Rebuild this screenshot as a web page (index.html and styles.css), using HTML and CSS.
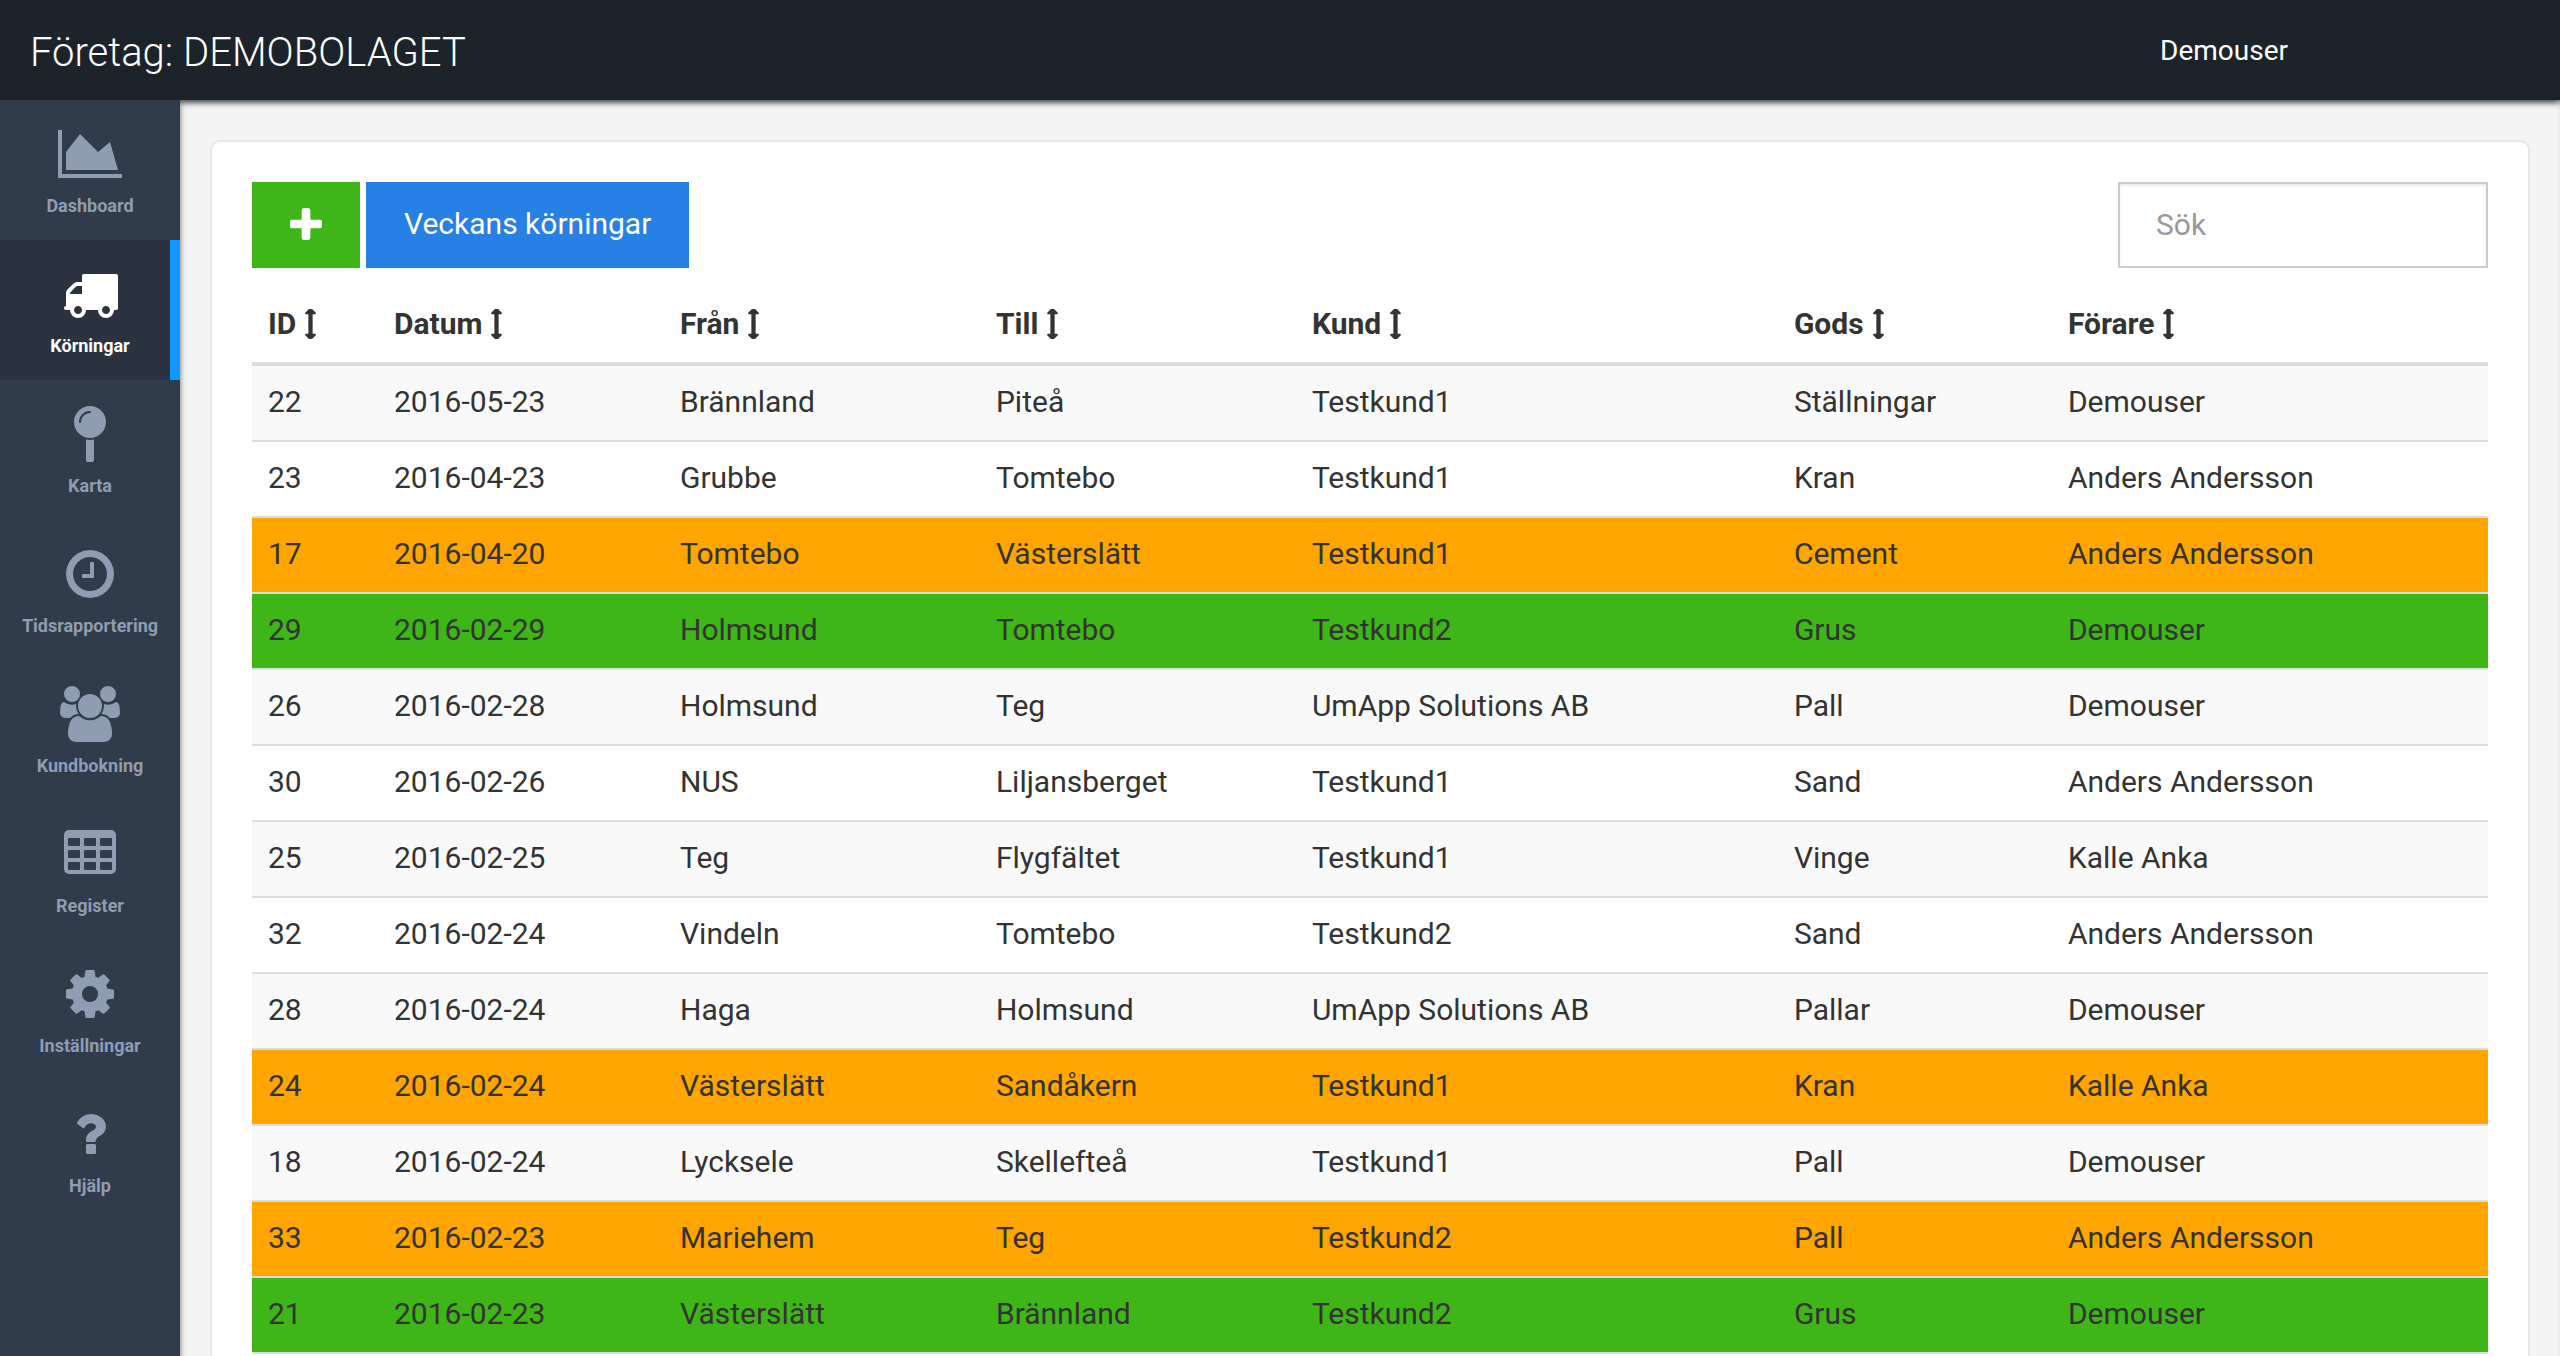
FILE: index.html
```html
<!DOCTYPE html>
<html lang="sv">
<head>
<meta charset="utf-8">
<meta name="viewport" content="width=device-width, initial-scale=1">
<title>Körningar</title>
<link rel="stylesheet" href="styles.css">
</head>
<body>
<svg class="sprite" aria-hidden="true">
  <symbol id="sort" viewBox="0 0 640 1792"><path d="M640 256q0 26-19 45t-45 19h-128v1152h128q26 0 45 19t19 45-19 45l-256 256q-19 19-45 19t-45-19l-256-256q-19-19-19-45t19-45 45-19h128v-1152h-128q-26 0-45-19t-19-45 19-45l256-256q19-19 45-19t45 19l256 256q19 19 19 45z"/></symbol>
</svg>
<div class="app">
  <header class="topbar">
    <h1 class="company">Företag: DEMOBOLAGET</h1>
    <a class="user" href="#">Demouser</a>
  </header>
  <div class="body">
    <nav class="sidebar">
      <a class="nav-item" href="#">
        <svg class="nav-icon" viewBox="0 0 2048 1792"><path d="M2048 1536v128h-2048v-1536h128v1408h1920zm-384-1024l256 896h-1664v-576l448-576 576 576z"/></svg>
        <span>Dashboard</span>
      </a>
      <a class="nav-item active" href="#">
        <svg class="nav-icon" viewBox="0 0 1792 1792"><path d="M640 1408q0-52-38-90t-90-38-90 38-38 90 38 90 90 38 90-38 38-90zm-384-512h384v-256h-158q-13 0-22 9l-195 195q-9 9-9 22v30zm1280 512q0-52-38-90t-90-38-90 38-38 90 38 90 90 38 90-38 38-90zm256-1088v1024q0 15-4 26.500t-13.500 18.500-16.500 11.500-23.500 6-22.500 2-25.500 0-22.500-.5q0 106-75 181t-181 75-181-75-75-181h-384q0 106-75 181t-181 75-181-75-75-181h-64q-3 0-22.500.5t-25.500 0-22.500-2-23.500-6-16.500-11.500-13.500-18.500-4-26.500q0-26 19-45t45-19v-320q0-8-.5-35t0-38 2.500-34.500 6.500-37 14-30.500 22.500-30l198-198q19-19 50.500-32t58.500-13h160v-192q0-26 19-45t45-19h1024q26 0 45 19t19 45z"/></svg>
        <span>Körningar</span>
      </a>
      <a class="nav-item" href="#">
        <svg class="nav-icon" viewBox="0 0 1024 1792"><path d="M512 1088q66 0 128-15v655q0 26-19 45t-45 19h-128q-26 0-45-19t-19-45v-655q62 15 128 15zM512 0q212 0 362 150t150 362-150 362-362 150-362-150-150-362 150-362 362-150zM512 224q13 0 22.500-9.500t9.500-22.500-9.500-22.500-22.500-9.500q-146 0-249 103t-103 249q0 13 9.500 22.500t22.500 9.500 22.500-9.500 9.500-22.500q0-119 84.500-203.500t203.500-84.500z"/></svg>
        <span>Karta</span>
      </a>
      <a class="nav-item" href="#">
        <svg class="nav-icon" viewBox="0 0 1792 1792"><path d="M1024 544v448q0 14-9 23t-23 9h-320q-14 0-23-9t-9-23v-64q0-14 9-23t23-9h224v-352q0-14 9-23t23-9h64q14 0 23 9t9 23zm416 352q0-148-73-273t-198-198-273-73-273 73-198 198-73 273 73 273 198 198 273 73 273-73 198-198 73-273zm224 0q0 209-103 385.500t-279.500 279.500-385.500 103-385.500-103-279.500-279.500-103-385.500 103-385.500 279.500-279.500 385.500-103 385.500 103 279.500 279.500 103 385.500z"/></svg>
        <span>Tidsrapportering</span>
      </a>
      <a class="nav-item" href="#">
        <svg class="nav-icon" viewBox="0 0 1920 1792"><path d="M593 896q-162 5-265 128h-134q-82 0-138-40.500t-56-118.500q0-353 124-353 6 0 43.500 21t97.500 42.500 119 21.500q67 0 133-23-5 37-5 66 0 139 81 256zM1664 1533q0 120-73 189.500t-194 69.500h-874q-121 0-194-69.500t-73-189.500q0-53 3.500-103.500t14-109 26.500-108.500 43-97.500 62-81 85.500-53.500 111.500-20q10 0 43 21.500t73 48 107 48 135 21.500 135-21.500 107-48 73-48 43-21.500q61 0 111.500 20t85.500 53.500 62 81 43 97.500 26.500 108.500 14 109 3.500 103.500zM640 256q0 106-75 181t-181 75-181-75-75-181 75-181 181-75 181 75 75 181zM1344 640q0 159-112.500 271.500t-271.500 112.500-271.500-112.500-112.500-271.500 112.500-271.500 271.500-112.500 271.500 112.500 112.500 271.500zM1920 865q0 78-56 118.500t-138 40.500h-134q-103-123-265-128 81-117 81-256 0-29-5-66 66 23 133 23 59 0 119-21.500t97.500-42.500 43.500-21q124 0 124 353zM1792 256q0 106-75 181t-181 75-181-75-75-181 75-181 181-75 181 75 75 181z"/></svg>
        <span>Kundbokning</span>
      </a>
      <a class="nav-item" href="#">
        <svg class="nav-icon" viewBox="0 0 1664 1792"><path fill-rule="evenodd" d="M160 128h1344q66 0 113 47t47 113v1088q0 66-47 113t-113 47h-1344q-66 0-113-47t-47-113v-1088q0-66 47-113t113-47zM160 384q-32 0-32 32v192q0 32 32 32h320q32 0 32-32v-192q0-32-32-32zM672 384q-32 0-32 32v192q0 32 32 32h320q32 0 32-32v-192q0-32-32-32zM1184 384q-32 0-32 32v192q0 32 32 32h320q32 0 32-32v-192q0-32-32-32zM160 768q-32 0-32 32v192q0 32 32 32h320q32 0 32-32v-192q0-32-32-32zM672 768q-32 0-32 32v192q0 32 32 32h320q32 0 32-32v-192q0-32-32-32zM1184 768q-32 0-32 32v192q0 32 32 32h320q32 0 32-32v-192q0-32-32-32zM160 1152q-32 0-32 32v192q0 32 32 32h320q32 0 32-32v-192q0-32-32-32zM672 1152q-32 0-32 32v192q0 32 32 32h320q32 0 32-32v-192q0-32-32-32zM1184 1152q-32 0-32 32v192q0 32 32 32h320q32 0 32-32v-192q0-32-32-32z"/></svg>
        <span>Register</span>
      </a>
      <a class="nav-item" href="#">
        <svg class="nav-icon" viewBox="0 0 1792 1792"><path d="M1152 896q0-106-75-181t-181-75-181 75-75 181 75 181 181 75 181-75 75-181zm512-109v222q0 12-8 23t-20 13l-185 28q-19 54-39 91 35 50 107 138 10 12 10 25t-9 23q-27 37-99 108t-94 71q-12 0-26-9l-138-108q-44 23-91 38-16 136-29 186-7 28-36 28h-222q-14 0-24.500-8.500t-11.500-21.500l-28-184q-49-16-90-37l-141 107q-10 9-25 9-14 0-25-11-126-114-165-168-7-10-7-23 0-12 8-23 15-21 51-66.500t54-70.500q-27-50-41-99l-183-27q-13-2-21-12.500t-8-23.500v-222q0-12 8-23t19-13l186-28q14-46 39-92-40-57-107-138-10-12-10-24 0-10 9-23 26-36 98.500-107.500t94.500-71.500q13 0 26 10l138 107q44-23 91-38 16-136 29-186 7-28 36-28h222q14 0 24.500 8.500t11.500 21.500l28 184q49 16 90 37l142-107q9-9 24-9 13 0 25 10 129 119 165 170 7 8 7 22 0 12-8 23-15 21-51 66.500t-54 70.500q26 50 41 98l183 28q13 2 21 12.500t8 23.500z"/></svg>
        <span>Inställningar</span>
      </a>
      <a class="nav-item" href="#">
        <svg class="nav-icon" viewBox="0 -56 1024 1792"><path d="M704 1200v240q0 16-12 28t-28 12h-240q-16 0-28-12t-12-28v-240q0-16 12-28t28-12h240q16 0 28 12t12 28zM1020 600q0 54-15.500 101t-35 76.500-55 59.500-57.500 43.500-61 35.500q-41 23-68.500 65t-27.500 67q0 17-12 32.500t-28 15.500h-240q-15 0-25.500-18.500t-10.500-37.500v-45q0-83 65-156.500t143-108.500q59-27 84-56t25-76q0-42-46.500-74t-107.500-32q-65 0-108 29-35 25-107 115-13 16-31 16-12 0-25-8l-164-125q-13-10-15.500-25t5.500-28q160-266 464-266 80 0 161 31t146 83 106 127.500 41 158.500z"/></svg>
        <span>Hjälp</span>
      </a>
    </nav>
    <main class="content">
      <section class="card">
        <div class="toolbar">
          <button class="btn btn-add" type="button" aria-label="Ny körning">
            <svg class="plus" viewBox="0 0 1408 1408"><path d="M1408 608v192q0 40-28 68t-68 28h-416v416q0 40-28 68t-68 28h-192q-40 0-68-28t-28-68v-416h-416q-40 0-68-28t-28-68v-192q0-40 28-68t68-28h416v-416q0-40 28-68t68-28h192q40 0 68 28t28 68v416h416q40 0 68 28t28 68z"/></svg>
          </button>
          <button class="btn btn-week" type="button">Veckans körningar</button>
          <input class="search" type="search" placeholder="Sök" aria-label="Sök">
        </div>
        <table class="runs">
          <colgroup>
            <col class="c-id"><col class="c-date"><col class="c-place"><col class="c-place"><col class="c-customer"><col class="c-goods"><col class="c-driver">
          </colgroup>
          <thead>
            <tr>
              <th><button class="sort" type="button">ID<svg><use href="#sort"/></svg></button></th>
              <th><button class="sort" type="button">Datum<svg><use href="#sort"/></svg></button></th>
              <th><button class="sort" type="button">Från<svg><use href="#sort"/></svg></button></th>
              <th><button class="sort" type="button">Till<svg><use href="#sort"/></svg></button></th>
              <th><button class="sort" type="button">Kund<svg><use href="#sort"/></svg></button></th>
              <th><button class="sort" type="button">Gods<svg><use href="#sort"/></svg></button></th>
              <th><button class="sort" type="button">Förare<svg><use href="#sort"/></svg></button></th>
            </tr>
          </thead>
          <tbody>
            <tr><td>22</td><td>2016-05-23</td><td>Brännland</td><td>Piteå</td><td>Testkund1</td><td>Ställningar</td><td>Demouser</td></tr>
            <tr><td>23</td><td>2016-04-23</td><td>Grubbe</td><td>Tomtebo</td><td>Testkund1</td><td>Kran</td><td>Anders Andersson</td></tr>
            <tr class="ongoing"><td>17</td><td>2016-04-20</td><td>Tomtebo</td><td>Västerslätt</td><td>Testkund1</td><td>Cement</td><td>Anders Andersson</td></tr>
            <tr class="done"><td>29</td><td>2016-02-29</td><td>Holmsund</td><td>Tomtebo</td><td>Testkund2</td><td>Grus</td><td>Demouser</td></tr>
            <tr><td>26</td><td>2016-02-28</td><td>Holmsund</td><td>Teg</td><td>UmApp Solutions AB</td><td>Pall</td><td>Demouser</td></tr>
            <tr><td>30</td><td>2016-02-26</td><td>NUS</td><td>Liljansberget</td><td>Testkund1</td><td>Sand</td><td>Anders Andersson</td></tr>
            <tr><td>25</td><td>2016-02-25</td><td>Teg</td><td>Flygfältet</td><td>Testkund1</td><td>Vinge</td><td>Kalle Anka</td></tr>
            <tr><td>32</td><td>2016-02-24</td><td>Vindeln</td><td>Tomtebo</td><td>Testkund2</td><td>Sand</td><td>Anders Andersson</td></tr>
            <tr><td>28</td><td>2016-02-24</td><td>Haga</td><td>Holmsund</td><td>UmApp Solutions AB</td><td>Pallar</td><td>Demouser</td></tr>
            <tr class="ongoing"><td>24</td><td>2016-02-24</td><td>Västerslätt</td><td>Sandåkern</td><td>Testkund1</td><td>Kran</td><td>Kalle Anka</td></tr>
            <tr><td>18</td><td>2016-02-24</td><td>Lycksele</td><td>Skellefteå</td><td>Testkund1</td><td>Pall</td><td>Demouser</td></tr>
            <tr class="ongoing"><td>33</td><td>2016-02-23</td><td>Mariehem</td><td>Teg</td><td>Testkund2</td><td>Pall</td><td>Anders Andersson</td></tr>
            <tr class="done"><td>21</td><td>2016-02-23</td><td>Västerslätt</td><td>Brännland</td><td>Testkund2</td><td>Grus</td><td>Demouser</td></tr>
          </tbody>
        </table>
      </section>
    </main>
  </div>
</div>
</body>
</html>
```

FILE: styles.css
```css
* {
  box-sizing: border-box;
}

body {
  margin: 0;
  background: #f4f4f4;
  color: #333;
  font: 30px/42px Roboto, sans-serif;
}

a {
  color: inherit;
  text-decoration: none;
}

button,
input {
  font: inherit;
  color: inherit;
  border-radius: 0;
  appearance: none;
}

svg {
  fill: currentColor;
}

.sprite {
  display: none;
}

.app {
  display: flex;
  flex-direction: column;
  height: 100vh;
}

/* Top bar */
.topbar {
  display: flex;
  align-items: center;
  justify-content: space-between;
  flex: none;
  height: 100px;
  padding: 0 272px 0 30px;
  background: #1d232b;
  color: #fff;
  box-shadow: 0 4px 6px -2px rgba(0, 0, 0, 0.5);
}

.company {
  margin: 0;
  padding-top: 6px;
  font-size: 40px;
  font-weight: 300;
  line-height: 48px;
}

.user {
  padding-top: 2px;
  font-size: 28px;
}

.body {
  display: flex;
  flex: 1;
  min-height: 0;
}

/* Side menu */
.sidebar {
  z-index: 1;
  flex: none;
  width: 180px;
  background: #303b4b;
  color: #8e9db1;
  box-shadow: 0 4px 6px rgba(0, 0, 0, 0.5);
  clip-path: inset(0 -12px 0 0);
}

.nav-item {
  display: flex;
  flex-direction: column;
  align-items: center;
  gap: 12px;
  height: 140px;
  padding-top: 26px;
  font-size: 18px;
  font-weight: 700;
  line-height: 24px;
}

.nav-item.active {
  background: #2b3341;
  color: #fff;
  box-shadow: inset -10px 0 #0f98ff;
}

.nav-icon {
  height: 56px;
}

/* Content */
.content {
  flex: 1;
  min-width: 0;
  padding: 40px 30px;
  overflow-y: auto;
  scrollbar-width: none;
  box-shadow: inset 0 6px 6px -4px rgba(0, 0, 0, 0.5);
}

.card {
  padding: 40px;
  background: #fff;
  border: 2px solid #e7e7e7;
  border-radius: 10px;
}

.toolbar {
  display: flex;
  gap: 6px;
  margin-bottom: 20px;
}

.btn {
  height: 86px;
  padding: 0 38px 2px;
  border: 0;
  color: #fff;
  cursor: pointer;
}

.btn-add {
  background: #3fb618;
}

.btn-week {
  background: #2780e3;
}

.plus {
  display: block;
  width: 32px;
  height: 32px;
}

.search {
  width: 370px;
  height: 86px;
  margin-left: auto;
  padding: 0 36px 2px;
  background: #fff;
  border: 2px solid #ccc;
  box-shadow: inset 0 2px 2px rgba(0, 0, 0, 0.08);
}

.search::placeholder {
  color: #999;
}

/* Table */
.runs {
  width: 100%;
  table-layout: fixed;
  border-spacing: 0;
}

.c-id { width: 5.635%; }
.c-date { width: 12.79%; }
.c-place { width: 14.13%; }
.c-customer { width: 21.556%; }
.c-goods { width: 12.254%; }
.c-driver { width: 19.5%; }

.runs th,
.runs td {
  height: 76px;
  padding: 15px 16px 17px;
  text-align: left;
}

.runs th {
  height: 78px;
  border-bottom: 4px solid #ddd;
}

.runs td {
  border-bottom: 2px solid #ddd;
}

.runs tbody tr:nth-child(odd) {
  background: #f9f9f9;
}

.runs tbody tr.ongoing {
  background: #ffa500;
}

.runs tbody tr.done {
  background: #3fb618;
}

.sort {
  display: flex;
  align-items: center;
  gap: 9px;
  padding: 0;
  border: 0;
  background: none;
  font-weight: 700;
  cursor: pointer;
}

.sort svg {
  width: 11px;
  height: 30px;
}
```
